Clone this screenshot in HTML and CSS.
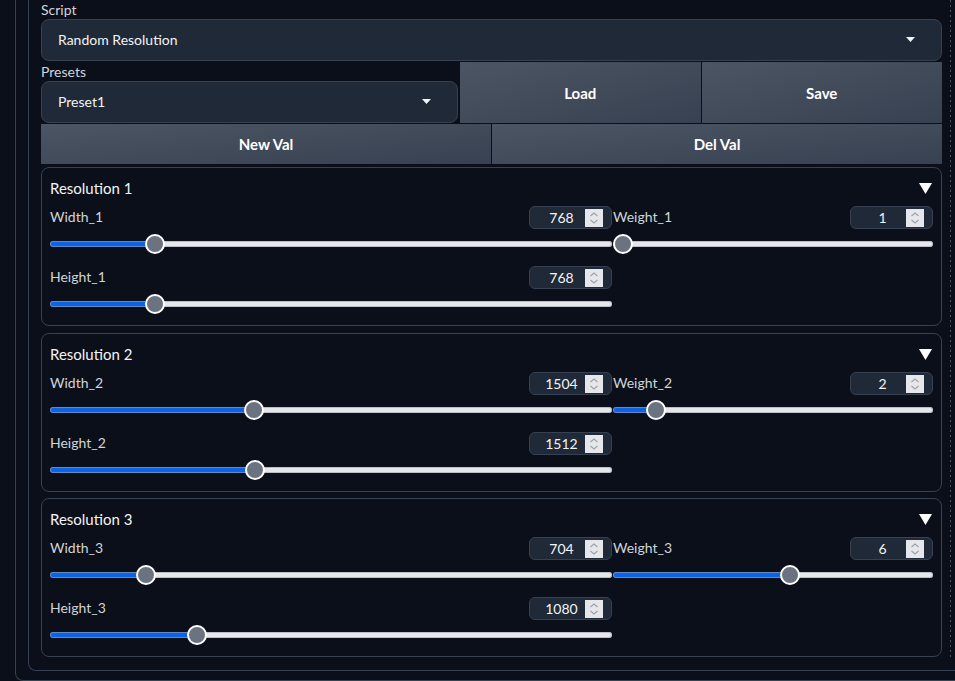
FILE: index.html
```html
<!DOCTYPE html>
<html>
<head>
<meta charset="utf-8">
<link rel="stylesheet" href="styles.css">
</head>
<body>
<div class="outer">
  <div class="inner">
    <div class="content">
      <div class="main">
        <div class="label">Script</div>
        <div class="dropdown">
          <span>Random Resolution</span>
          <svg class="caret" width="9" height="5" viewBox="0 0 9 5"><polygon points="0,0 9,0 4.5,5" fill="#f3f4f6"/></svg>
        </div>
        <div class="row2">
          <div class="preset-col">
            <div class="label">Presets</div>
            <div class="dropdown">
              <span>Preset1</span>
              <svg class="caret" width="9" height="5" viewBox="0 0 9 5"><polygon points="0,0 9,0 4.5,5" fill="#f3f4f6"/></svg>
            </div>
          </div>
          <div class="btns">
            <button class="btn">Load</button>
            <button class="btn">Save</button>
          </div>
        </div>
        <div class="row3">
          <button class="btn">New Val</button>
          <button class="btn">Del Val</button>
        </div>

        <div class="box">
          <div class="box-head">
            <span class="title">Resolution 1</span>
            <svg class="tri" width="13" height="11" viewBox="0 0 13 11"><polygon points="0,0 13,0 6.5,11" fill="#ffffff"/></svg>
          </div>
          <div class="sliders">
            <div class="col">
              <div class="sblock">
                <div class="srow"><span class="slabel">Width_1</span><div class="num"><span class="val">768</span><span class="spin"><svg width="18" height="18" viewBox="0 0 18 18"><polyline points="5.5,7 9,4 12.5,7" /><polyline points="5.5,11 9,14 12.5,11" /></svg></span></div></div>
                <input class="slider" type="range" min="64" max="4096" step="8" value="768" style="--p:0.1746">
              </div>
              <div class="sblock">
                <div class="srow"><span class="slabel">Height_1</span><div class="num"><span class="val">768</span><span class="spin"><svg width="18" height="18" viewBox="0 0 18 18"><polyline points="5.5,7 9,4 12.5,7" /><polyline points="5.5,11 9,14 12.5,11" /></svg></span></div></div>
                <input class="slider" type="range" min="64" max="4096" step="8" value="768" style="--p:0.1746">
              </div>
            </div>
            <div class="col">
              <div class="sblock">
                <div class="srow"><span class="slabel">Weight_1</span><div class="num"><span class="val">1</span><span class="spin"><svg width="18" height="18" viewBox="0 0 18 18"><polyline points="5.5,7 9,4 12.5,7" /><polyline points="5.5,11 9,14 12.5,11" /></svg></span></div></div>
                <input class="slider" type="range" min="1" max="10" step="1" value="1" style="--p:0">
              </div>
            </div>
          </div>
        </div>

        <div class="box">
          <div class="box-head">
            <span class="title">Resolution 2</span>
            <svg class="tri" width="13" height="11" viewBox="0 0 13 11"><polygon points="0,0 13,0 6.5,11" fill="#ffffff"/></svg>
          </div>
          <div class="sliders">
            <div class="col">
              <div class="sblock">
                <div class="srow"><span class="slabel">Width_2</span><div class="num"><span class="val">1504</span><span class="spin"><svg width="18" height="18" viewBox="0 0 18 18"><polyline points="5.5,7 9,4 12.5,7" /><polyline points="5.5,11 9,14 12.5,11" /></svg></span></div></div>
                <input class="slider" type="range" min="64" max="4096" step="8" value="1504" style="--p:0.3571">
              </div>
              <div class="sblock">
                <div class="srow"><span class="slabel">Height_2</span><div class="num"><span class="val">1512</span><span class="spin"><svg width="18" height="18" viewBox="0 0 18 18"><polyline points="5.5,7 9,4 12.5,7" /><polyline points="5.5,11 9,14 12.5,11" /></svg></span></div></div>
                <input class="slider" type="range" min="64" max="4096" step="8" value="1512" style="--p:0.3591">
              </div>
            </div>
            <div class="col">
              <div class="sblock">
                <div class="srow"><span class="slabel">Weight_2</span><div class="num"><span class="val">2</span><span class="spin"><svg width="18" height="18" viewBox="0 0 18 18"><polyline points="5.5,7 9,4 12.5,7" /><polyline points="5.5,11 9,14 12.5,11" /></svg></span></div></div>
                <input class="slider" type="range" min="1" max="10" step="1" value="2" style="--p:0.1111">
              </div>
            </div>
          </div>
        </div>

        <div class="box">
          <div class="box-head">
            <span class="title">Resolution 3</span>
            <svg class="tri" width="13" height="11" viewBox="0 0 13 11"><polygon points="0,0 13,0 6.5,11" fill="#ffffff"/></svg>
          </div>
          <div class="sliders">
            <div class="col">
              <div class="sblock">
                <div class="srow"><span class="slabel">Width_3</span><div class="num"><span class="val">704</span><span class="spin"><svg width="18" height="18" viewBox="0 0 18 18"><polyline points="5.5,7 9,4 12.5,7" /><polyline points="5.5,11 9,14 12.5,11" /></svg></span></div></div>
                <input class="slider" type="range" min="64" max="4096" step="8" value="704" style="--p:0.1587">
              </div>
              <div class="sblock">
                <div class="srow"><span class="slabel">Height_3</span><div class="num"><span class="val">1080</span><span class="spin"><svg width="18" height="18" viewBox="0 0 18 18"><polyline points="5.5,7 9,4 12.5,7" /><polyline points="5.5,11 9,14 12.5,11" /></svg></span></div></div>
                <input class="slider" type="range" min="64" max="4096" step="8" value="1080" style="--p:0.2520">
              </div>
            </div>
            <div class="col">
              <div class="sblock">
                <div class="srow"><span class="slabel">Weight_3</span><div class="num"><span class="val">6</span><span class="spin"><svg width="18" height="18" viewBox="0 0 18 18"><polyline points="5.5,7 9,4 12.5,7" /><polyline points="5.5,11 9,14 12.5,11" /></svg></span></div></div>
                <input class="slider" type="range" min="1" max="10" step="1" value="6" style="--p:0.5556">
              </div>
            </div>
          </div>
        </div>
      </div>
      <div class="dots"></div>
    </div>
  </div>
</div>
</body>
</html>
```
FILE: styles.css
```css
html, body {
  margin: 0;
  padding: 0;
  background: #0b0f19;
  height: 681px;
  overflow: hidden;
}
body {
  font-family: Lato, "Noto Sans", sans-serif;
  color: #e5e7eb;
}
.outer {
  margin-left: 15px;
  height: 681px;
  box-sizing: border-box;
  border-left: 1px solid #374151;
  border-bottom: 1px solid #374151;
  border-bottom-left-radius: 8px;
  padding-left: 12px;
}
.inner {
  height: 671px;
  box-sizing: border-box;
  border-left: 1px solid #374151;
  border-bottom: 1px solid #374151;
  border-bottom-left-radius: 8px;
  padding-left: 12px;
}
.content {
  display: flex;
}
.main {
  width: 901px;
  flex: none;
  display: flex;
  flex-direction: column;
}
.dots {
  width: 1px;
  flex: none;
  margin-left: 8px;
  background: repeating-linear-gradient(to bottom, #4b5563 0 2px, transparent 2px 5px);
}
.label {
  height: 19px;
  line-height: 19px;
  font-size: 14px;
  color: #d1d5db;
}
.dropdown {
  height: 42px;
  box-sizing: border-box;
  border: 1px solid #374151;
  border-radius: 8px;
  background: #1f2937;
  display: flex;
  align-items: center;
  justify-content: space-between;
  padding: 0 26px 1px 16px;
  font-size: 14px;
  color: #f3f4f6;
}
.caret {
  display: block;
}
.row2 {
  display: flex;
  margin-top: 1px;
  height: 61px;
}
.preset-col {
  width: 417px;
  margin-right: 2px;
  display: flex;
  flex-direction: column;
}
.btns {
  flex: 1;
  display: flex;
  gap: 1px;
}
.btn {
  flex: 1;
  border: none;
  margin: 0;
  padding: 0;
  background: linear-gradient(to bottom right, #4b5563, #374151);
  color: #ffffff;
  font-family: Lato, "Noto Sans", sans-serif;
  font-weight: 700;
  font-size: 15px;
}
.row3 {
  display: flex;
  gap: 1px;
  margin-top: 1px;
  height: 40px;
}
.box {
  height: 159px;
  box-sizing: border-box;
  border: 1px solid #374151;
  border-radius: 8px;
  padding: 9px 8px 8px;
  margin-top: 7px;
}
.row3 + .box {
  margin-top: 3px;
}
.box:last-child {
  margin-top: 6px;
}
.box-head {
  height: 22px;
  display: flex;
  align-items: center;
  justify-content: space-between;
  padding-right: 1px;
}
.title {
  font-size: 15px;
  color: #f3f4f6;
}
.tri {
  display: block;
}
.sliders {
  margin-top: 7px;
  display: grid;
  grid-template-columns: 562px 320px;
  column-gap: 1px;
}
.col {
  display: flex;
  flex-direction: column;
  gap: 9px;
}
.srow {
  height: 23px;
  display: flex;
  align-items: center;
  justify-content: space-between;
}
.slabel {
  font-size: 14px;
  color: #d1d5db;
  margin-top: -3px;
}
.num {
  width: 83px;
  height: 23px;
  box-sizing: border-box;
  border: 1px solid #374151;
  border-radius: 6px;
  background: #1f2937;
  display: flex;
  align-items: center;
  padding: 0 8px;
}
.val {
  flex: 1;
  text-align: center;
  font-size: 14px;
  color: #f3f4f6;
}
.spin {
  width: 18px;
  height: 18px;
  background: #e5e7eb;
  display: block;
}
.spin svg {
  display: block;
  fill: none;
  stroke: #9ca3af;
  stroke-width: 1.2;
}
.slider {
  -webkit-appearance: none;
  appearance: none;
  display: block;
  width: 100%;
  height: 6px;
  margin: 12px 0 10px;
  padding: 0;
  background: transparent;
}
.slider::-webkit-slider-runnable-track {
  height: 6px;
  border-radius: 3px;
  background: linear-gradient(to right, #0b63e5 0, #0b63e5 calc(10px + var(--p) * (100% - 20px)), #e5e7eb calc(10px + var(--p) * (100% - 20px)));
  box-shadow: inset 0 0 0 1px rgba(156, 163, 175, 0.6);
}
.slider::-webkit-slider-thumb {
  -webkit-appearance: none;
  appearance: none;
  width: 20px;
  height: 20px;
  box-sizing: border-box;
  border-radius: 50%;
  background: #6b7280;
  border: 2px solid #ffffff;
  margin-top: -7px;
}
```
